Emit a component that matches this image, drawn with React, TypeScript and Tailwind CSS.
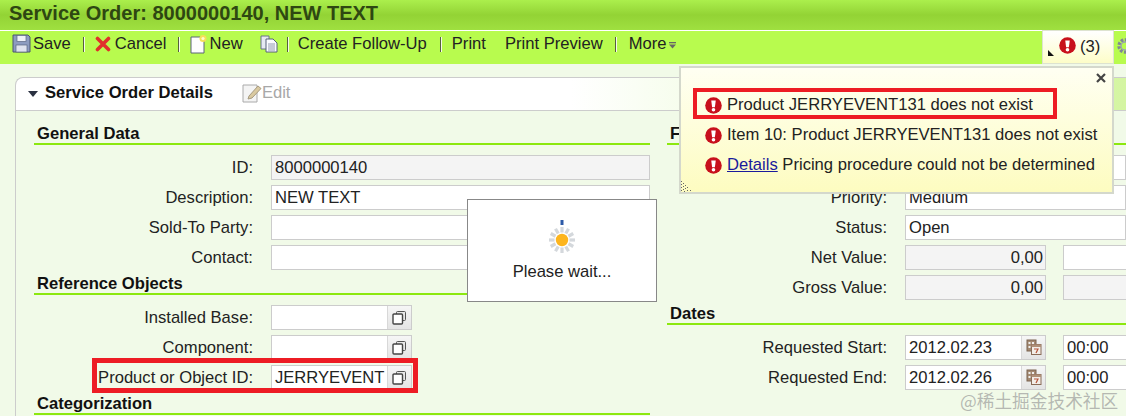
import React from "react";

const font = { fontFamily: '"Liberation Sans", Arial, sans-serif' };

function ErrIcon({ size = 17 }: { size?: number }) {
  return (
    <svg width={size} height={size} viewBox="0 0 16 16" className="shrink-0">
      <circle cx="8" cy="8" r="7.8" fill="#c8101c" />
      <path d="M5.9 3.4h4.2L9.3 9.6H6.7z" fill="#fff" />
      <circle cx="8" cy="12" r="1.7" fill="#fff" />
    </svg>
  );
}

function CopyIcon() {
  return (
    <svg width="15" height="15" viewBox="0 0 15 15">
      <rect x="4.5" y="1.5" width="9" height="9" rx="1" fill="#e8e8e8" stroke="#555" />
      <rect x="1" y="4" width="9.5" height="10" rx="1" fill="#fff" stroke="#444" strokeWidth="1.4" />
    </svg>
  );
}

function CalIcon() {
  return (
    <svg width="16" height="16" viewBox="0 0 16 16">
      <rect x="1" y="1" width="9" height="11" fill="#a58a72" stroke="#7a6350" />
      <rect x="2.5" y="3" width="2" height="2" fill="#eee" />
      <rect x="6" y="3" width="2" height="2" fill="#eee" />
      <rect x="2.5" y="7" width="2" height="2" fill="#eee" />
      <rect x="5.5" y="5.5" width="9.5" height="10" fill="#f3eee8" stroke="#8a6d58" />
      <rect x="5.5" y="5.5" width="9.5" height="2.5" fill="#b09078" />
      <path d="M8 10h4l-2 4" fill="none" stroke="#b5543a" strokeWidth="1.2" />
    </svg>
  );
}

function Sep() {
  return <span className="block w-[2px] h-[15px] bg-[#f4fbe8] border-l border-[#55603f] shrink-0" />;
}

function Input({
  w,
  value,
  grey,
  right,
  action,
  grow,
}: {
  w?: string;
  value?: string;
  grey?: boolean;
  right?: boolean;
  action?: React.ReactNode;
  grow?: boolean;
}) {
  return (
    <div
      className={`h-[25px] flex border border-[#cccccc] overflow-hidden shrink-0 ${w ?? ""} ${grow ? "flex-1" : ""} ${
        grey ? "bg-[#f4f4f4]" : "bg-white"
      }`}
    >
      <span
        className={`flex-1 min-w-0 overflow-hidden whitespace-nowrap leading-[23px] text-[16.6px] text-[#222] ${
          right ? "text-right pr-[2px]" : "pl-[3px]"
        }`}
      >
        {value}
      </span>
      {action && (
        <span className="w-[24px] shrink-0 border-l border-[#d8d8d8] bg-gradient-to-b from-[#f6f6f6] to-[#e4e4e4] flex items-center justify-center">
          {action}
        </span>
      )}
    </div>
  );
}

function Row({
  label,
  labelW,
  children,
}: {
  label: string;
  labelW: string;
  children: React.ReactNode;
}) {
  return (
    <div className="h-[30px] flex items-center">
      <span className={`${labelW} shrink-0 pt-[2px] text-right text-[16.6px] text-[#222] mr-[18px] whitespace-nowrap`}>{label}</span>
      {children}
    </div>
  );
}

function Head({ text }: { text: string }) {
  return (
    <div className="h-[30px]">
      <div className="h-[23px] border-b-2 border-[#8ce80f] pl-[3px] text-[16.6px] leading-[23px] font-bold text-[#111] whitespace-nowrap">
        {text}
      </div>
    </div>
  );
}

const L = "w-[219px]";
const R = "w-[220px]";

export default function App() {
  return (
    <div className="w-[1126px] h-[416px] overflow-hidden relative bg-[#f1fae8] flex flex-col" style={font}>
      <div className="h-[30px] shrink-0 bg-gradient-to-b from-[#abef4c] via-[#93d335] to-[#9fe040] pl-[9px] text-[20px] leading-[26px] font-bold text-[#2e4712] whitespace-nowrap">
        Service Order: 8000000140, NEW TEXT
      </div>
      <div className="h-px bg-white shrink-0" />
      <div className="h-[33px] shrink-0 bg-[#b8fb4e] flex items-center pb-[7px] text-[16.6px] text-[#222] whitespace-nowrap relative">
        <span className="ml-[12px] flex items-center">
          <svg width="19" height="19" viewBox="0 0 19 19">
            <path d="M1 1h15l2 2v15H1z" fill="#8d9cc0" stroke="#4a5570" />
            <rect x="5" y="1.5" width="9" height="6" fill="#eef1f8" stroke="#5a6580" strokeWidth=".7" />
            <rect x="4" y="11" width="11" height="7" fill="#dfe3ee" stroke="#5a6580" strokeWidth=".7" />
          </svg>
          <span className="ml-[2px]">Save</span>
        </span>
        <span className="ml-[12px]"><Sep /></span>
        <span className="ml-[10px] flex items-center">
          <svg width="16" height="16" viewBox="0 0 16 16">
            <path d="M2.5 2.5l11 11M13.5 2.5l-11 11" stroke="#e0302c" strokeWidth="3.6" strokeLinecap="round" />
          </svg>
          <span className="ml-[4px]">Cancel</span>
        </span>
        <span className="ml-[12px]"><Sep /></span>
        <span className="ml-[10px] flex items-center">
          <svg width="18" height="20" viewBox="0 0 18 20">
            <path d="M1 3h10l3 3v13H1z" fill="#fdfdfd" stroke="#5b6478" />
            <circle cx="13" cy="4.5" r="3.5" fill="#f6e05a" />
            <circle cx="13" cy="4.5" r="1.6" fill="#fffbd0" />
          </svg>
          <span className="ml-[1px]">New</span>
        </span>
        <span className="ml-[17px]">
          <svg width="18" height="18" viewBox="0 0 18 18" className="block">
            <path d="M1 1h8v13H1z" fill="#e6e9f2" stroke="#68708a" />
            <path d="M6 4h7l4 4v9H6z" fill="#fafbff" stroke="#56607a" />
            <path d="M8 9h7M8 11h7M8 13h7M8 15h7" stroke="#7a84a0" strokeWidth=".8" />
          </svg>
        </span>
        <span className="ml-[9px]"><Sep /></span>
        <span className="ml-[9px]">Create Follow-Up</span>
        <span className="ml-[13px]"><Sep /></span>
        <span className="ml-[10px]">Print</span>
        <span className="ml-[19px]">Print Preview</span>
        <span className="ml-[12px]"><Sep /></span>
        <span className="ml-[12px]">More</span>
        <svg width="8" height="7" viewBox="0 0 8 7" className="ml-[3px] mt-[3px]">
          <path d="M0 0h7v1.3H0z" fill="#666" />
          <path d="M0 2.4h7L3.5 6.5z" fill="#666" />
        </svg>
        <div className="absolute left-[1042px] top-[-1px] w-[72px] h-[34px] border border-[#dde3d0] bg-gradient-to-b from-white to-[#fdfdc8] flex items-center">
          <svg width="6" height="6" viewBox="0 0 6 6" className="ml-[5px] mt-[12px]"><path d="M0 6V0l6 6z" fill="#111" /></svg>
          <span className="ml-[5px] mt-[-3px]"><ErrIcon /></span>
          <span className="ml-[4px] text-[16.6px] text-[#222]">(3)</span>
        </div>
        <svg width="12" height="18" viewBox="0 0 12 18" className="absolute left-[1116px] top-[6px]">
          <circle cx="9" cy="9" r="6" fill="none" stroke="#7f8894" strokeWidth="3.4" strokeDasharray="2.5 1.4" />
          <circle cx="9" cy="9" r="4" fill="none" stroke="#9aa3b0" strokeWidth="1.4" />
        </svg>
      </div>

      <div className="flex-1 pl-[15px] pt-[13px] min-h-0">
        <div className="h-[34px] pb-[2px] rounded-tl-[8px] border-l border-t border-b border-[#cccccc] bg-gradient-to-r from-white via-white to-[#d4f5a2] flex items-center">
          <svg width="10" height="6" viewBox="0 0 10 6" className="ml-[12px] mt-[1px]"><path d="M0 0h10L5 6z" fill="#2a3040" /></svg>
          <span className="ml-[7px] text-[16.6px] font-bold text-[#111]">Service Order Details</span>
          <svg width="20" height="20" viewBox="0 0 20 20" className="ml-[29px]">
            <path d="M1 2h14v17H1z" fill="#f4f4f4" stroke="#aaa" />
            <path d="M7 13L16 3l3 2.5L10 15l-4 1z" fill="#d9c9a0" stroke="#a69a80" />
          </svg>
          <span className="text-[16.6px] text-[#a8a8a8]">Edit</span>
        </div>
        <div className="h-[400px] border-l border-[#cccccc] pl-[18px] pt-[11px] grid grid-cols-[616px_1fr] gap-x-[17px]">
          <div>
            <Head text="General Data" />
            <Row label="ID:" labelW={L}><Input w="w-[379px]" value="8000000140" grey /></Row>
            <Row label="Description:" labelW={L}><Input w="w-[379px]" value="NEW TEXT" /></Row>
            <Row label="Sold-To Party:" labelW={L}><Input w="w-[379px]" /></Row>
            <Row label="Contact:" labelW={L}><Input w="w-[379px]" /></Row>
            <Head text="Reference Objects" />
            <Row label="Installed Base:" labelW={L}><Input w="w-[141px]" action={<CopyIcon />} /></Row>
            <Row label="Component:" labelW={L}><Input w="w-[141px]" action={<CopyIcon />} /></Row>
            <Row label="Product or Object ID:" labelW={L}><Input w="w-[141px]" value="JERRYEVENT" action={<CopyIcon />} /></Row>
            <Head text="Categorization" />
          </div>
          <div className="min-w-0 w-[459px]">
            <Head text="F" />
            <Row label="" labelW={R}><Input grow /></Row>
            <Row label="Priority:" labelW={R}><Input grow value="Medium" /></Row>
            <Row label="Status:" labelW={R}><Input grow value="Open" /></Row>
            <Row label="Net Value:" labelW={R}>
              <Input w="w-[141px]" value="0,00" grey right />
              <span className="ml-[17px]"><Input w="w-[80px]" /></span>
            </Row>
            <Row label="Gross Value:" labelW={R}>
              <Input w="w-[141px]" value="0,00" grey right />
              <span className="ml-[17px]"><Input w="w-[80px]" grey /></span>
            </Row>
            <Head text="Dates" />
            <Row label="Requested Start:" labelW={R}>
              <Input w="w-[141px]" value="2012.02.23" action={<CalIcon />} />
              <span className="ml-[17px]"><Input w="w-[80px]" value="00:00" /></span>
            </Row>
            <Row label="Requested End:" labelW={R}>
              <Input w="w-[141px]" value="2012.02.26" action={<CalIcon />} />
              <span className="ml-[17px]"><Input w="w-[80px]" value="00:00" /></span>
            </Row>
          </div>
        </div>
      </div>

      {/* messages popover */}
      <div className="absolute left-[679px] top-[66px] w-[435px] h-[128px] border-2 border-[#d4d8cc] bg-gradient-to-b from-[#fffff2] to-[#fdfcc0] text-[16.6px] text-[#222]">
        <svg width="12" height="12" viewBox="0 0 12 12" className="absolute right-[5px] top-[4px]">
          <path d="M2 2l8 8M10 2l-8 8" stroke="#444" strokeWidth="2.2" />
        </svg>
        <div className="pl-[24px] pt-[22px] flex flex-col">
          {[
            <>Product JERRYEVENT131 does not exist</>,
            <>Item 10: Product JERRYEVENT131 does not exist</>,
            <>
              <span className="text-[#1a1a9c] underline">Details</span> Pricing procedure could not be determined
            </>,
          ].map((m, i) => (
            <div key={i} className="h-[30px] flex items-center whitespace-nowrap">
              <ErrIcon />
              <span className="ml-[5px] mt-[1px]">{m}</span>
            </div>
          ))}
        </div>
        <svg width="12" height="12" viewBox="0 0 12 12" className="absolute left-0 bottom-0">
          <path d="M0 1h1v1H0zM0 4h1v1H0zM2 3h1v1H2zM0 7h1v1H0zM2 6h1v1H2zM4 5h1v1H4zM0 10h1v1H0zM2 9h1v1H2zM4 8h1v1H4zM6 7h1v1H6zM3 11h1v1H3zM6 10h1v1H6zM9 10h1v1H9z" fill="#666" />
        </svg>
      </div>
      <div className="absolute left-[693px] top-[88px] w-[364px] h-[31px] border-[4px] border-[#ed1c24]" />

      {/* please wait */}
      <div className="absolute left-[467px] top-[199px] w-[190px] h-[103px] border border-[#888888] bg-white flex flex-col items-center text-[16.6px] text-[#222]">
        <svg width="28" height="34" viewBox="0 0 28 34" className="mt-[20px]">
          <rect x="12.5" y="0" width="3" height="5" fill="#2d5aa8" />
          {Array.from({ length: 12 }).map((_, i) => (
            <rect key={i} x="12.4" y="7" width="3.2" height="5.5" fill="#d4d8dc" transform={`rotate(${i * 30} 14 20)`} />
          ))}
          <circle cx="14" cy="20" r="6.2" fill="#fdb51e" />
        </svg>
        <span className="mt-[8px] leading-[20px]">Please wait...</span>
      </div>

      {/* highlight around product field */}
      <div className="absolute left-[92px] top-[358px] w-[326px] h-[35px] border-[5px] border-[#ed1c24]" />

      <span
        className="absolute left-[960px] top-[390px] text-[17.7px] leading-[20px] text-[#9a9a9a]/70 whitespace-nowrap"
        style={{ fontFamily: '"Noto Sans CJK SC", sans-serif' }}
      >
        @稀土掘金技术社区
      </span>
    </div>
  );
}
